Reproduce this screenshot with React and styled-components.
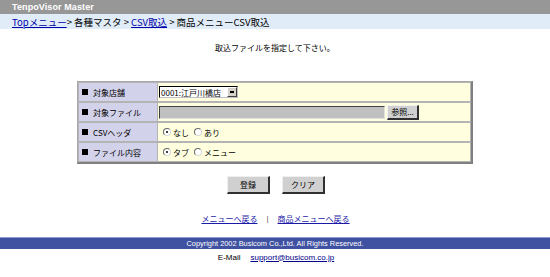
import React, { useState } from "react";
import styled, { createGlobalStyle } from "styled-components";

const GlobalStyle = createGlobalStyle`
  html, body {
    margin: 0;
    padding: 0;
    background: #ffffff;
  }
  body {
    font-family: "Noto Sans CJK JP", "Liberation Sans", sans-serif;
    font-size: 8px;
    color: #000000;
  }
`;

const Page = styled.div`
  width: 550px;
  height: 277px;
  display: flex;
  flex-direction: column;
  align-items: stretch;
  overflow: hidden;
`;

const TitleBar = styled.div`
  height: 14px;
  box-sizing: border-box;
  padding-left: 12px;
  display: flex;
  align-items: center;

  background: #979797;
  color: #ffffff;
  font-family: "Liberation Sans", sans-serif;
  font-size: 9px;
  font-weight: bold;
  letter-spacing: 0.1px;
`;

const Breadcrumb = styled.div`
  height: 15px;
  box-sizing: border-box;
  padding-left: 12px;
  display: flex;
  align-items: center;
  white-space: pre;

  background: #e0ecf8;
  font-size: 9.5px;
`;

const Link = styled.a`
  color: ${({ $tone }) => $tone || "#0000aa"};
  text-decoration: underline;
  cursor: pointer;
`;

const Message = styled.div`
  margin-top: 12px;
  height: 14px;
  line-height: 14px;
  text-align: center;
  font-size: 8px;
`;

const FormTable = styled.div`
  width: 396px;
  margin: 26px auto 0;
  box-sizing: border-box;

  display: grid;
  grid-template-columns: 78px 1fr;
  grid-auto-rows: 18px;
  gap: 2px 1px;

  padding: 1px;
  background: #b4b4b4;
  border: 1px solid #a8a8a8;
  border-right: 2px solid #808080;
  border-bottom: 2px solid #808080;
`;

const LabelCell = styled.div`
  display: flex;
  align-items: center;
  gap: 5px;
  padding-left: 3px;
  background: #d2d2ea;
  font-size: 8px;
  white-space: nowrap;

  &::before {
    content: "";
    width: 6px;
    height: 6px;
    background: #000000;
  }
`;

const ValueCell = styled.div`
  display: flex;
  align-items: center;
  gap: 2px;
  padding-left: 1px;
  background: #ffffe0;
  font-size: 8px;
`;

const Select = styled.div`
  width: 79px;
  height: 12px;
  box-sizing: border-box;
  display: flex;
  align-items: center;
  justify-content: space-between;

  background: #ffffff;
  border: 1px solid #000000;
  border-right-color: #c0c0c0;
  border-bottom-color: #c0c0c0;
  padding-left: 1px;
  font-size: 8px;
  white-space: nowrap;
`;

const SelectArrow = styled.span`
  width: 10px;
  height: 10px;
  box-sizing: border-box;
  display: flex;
  align-items: center;
  justify-content: center;
  background: #d4d0c8;
  border: 1px solid #ffffff;
  border-right-color: #404040;
  border-bottom-color: #404040;

  &::after {
    content: "";
    width: 4px;
    height: 2px;
    background: #000000;
  }
`;

const FileField = styled.div`
  width: 226px;
  height: 13px;
  box-sizing: border-box;
  background: #c0c0c0;
  border: 1px solid #404040;
  border-right-color: #e0e0e0;
  border-bottom-color: #e0e0e0;
`;

const SmallButton = styled.button`
  width: ${({ $width }) => $width || 32}px;
  height: ${({ $height }) => $height || 15}px;
  box-sizing: border-box;
  padding: 0;
  margin: 0;

  background: #d0d0d0;
  border: 1px solid #f0f0f0;
  border-right: 2px solid #303030;
  border-bottom: 2px solid #303030;
  font-family: "Noto Sans CJK JP", sans-serif;
  font-size: 8px;
  line-height: 1;
  color: #000000;
`;

const RadioGroup = styled.label`
  display: flex;
  align-items: center;
  gap: 2px;
  margin-left: ${({ $first }) => ($first ? 4 : 3)}px;
  cursor: pointer;
`;

const RadioDot = styled.span`
  width: 8px;
  height: 8px;
  box-sizing: border-box;
  border-radius: 50%;
  border: 1px solid #6a6a6a;
  border-right-color: #d8d8d8;
  border-bottom-color: #d8d8d8;
  background: #ffffff;
  display: flex;
  align-items: center;
  justify-content: center;

  &::after {
    content: "";
    width: 2px;
    height: 2px;
    border-radius: 50%;
    background: ${({ $checked }) => ($checked ? "#000000" : "transparent")};
  }
`;

const ButtonRow = styled.div`
  margin-top: 12px;
  display: flex;
  justify-content: center;
  gap: 12px;
  padding-left: 2px;
`;

const LinkRow = styled.div`
  margin-top: 17px;
  height: 14px;
  display: flex;
  justify-content: center;
  align-items: center;
  gap: 9px;
  font-size: 8px;
  padding-left: 1px;
`;

const Divider = styled.span`
  color: #555555;
  font-family: "Liberation Sans", sans-serif;
`;

const FooterBar = styled.div`
  margin-top: 12px;
  height: 12px;
  box-sizing: border-box;
  display: flex;
  align-items: center;
  justify-content: center;

  background: #3f51a1;
  border-top: 1px solid #8e9ad0;
  color: #ffffff;
  font-family: "Liberation Sans", sans-serif;
  font-size: 7.4px;
`;

const MailLine = styled.div`
  height: 16px;
  display: flex;
  justify-content: center;
  align-items: center;
  gap: 10px;
  font-family: "Liberation Sans", sans-serif;
  font-size: 8px;
  padding-left: 2px;
`;

const Radio = ({ checked, label, first, onSelect }) => (
  <RadioGroup $first={first} onClick={onSelect}>
    <RadioDot $checked={checked} />
    <span>{label}</span>
  </RadioGroup>
);

const App = () => {
  const [header, setHeader] = useState("none");
  const [content, setContent] = useState("tab");

  return (
    <>
      <GlobalStyle />
      <Page>
        <TitleBar>TenpoVisor Master</TitleBar>
        <Breadcrumb>
          <Link>Topメニュー</Link>
          {"> 各種マスタ > "}
          <Link>CSV取込</Link>
          {" > 商品メニューCSV取込"}
        </Breadcrumb>

        <Message>取込ファイルを指定して下さい。</Message>

        <FormTable>
          <LabelCell>対象店舗</LabelCell>
          <ValueCell>
            <Select>
              <span>0001:江戸川橋店</span>
              <SelectArrow />
            </Select>
          </ValueCell>

          <LabelCell>対象ファイル</LabelCell>
          <ValueCell>
            <FileField />
            <SmallButton type="button">参照...</SmallButton>
          </ValueCell>

          <LabelCell>CSVヘッダ</LabelCell>
          <ValueCell>
            <Radio
              first
              label="なし"
              checked={header === "none"}
              onSelect={() => setHeader("none")}
            />
            <Radio
              label="あり"
              checked={header === "with"}
              onSelect={() => setHeader("with")}
            />
          </ValueCell>

          <LabelCell>ファイル内容</LabelCell>
          <ValueCell>
            <Radio
              first
              label="タブ"
              checked={content === "tab"}
              onSelect={() => setContent("tab")}
            />
            <Radio
              label="メニュー"
              checked={content === "menu"}
              onSelect={() => setContent("menu")}
            />
          </ValueCell>
        </FormTable>

        <ButtonRow>
          <SmallButton type="button" $width={43} $height={18}>
            登録
          </SmallButton>
          <SmallButton type="button" $width={43} $height={18}>
            クリア
          </SmallButton>
        </ButtonRow>

        <LinkRow>
          <Link $tone="#1a1aa8">メニューへ戻る</Link>
          <Divider>|</Divider>
          <Link $tone="#1a1aa8">商品メニューへ戻る</Link>
        </LinkRow>

        <FooterBar>Copyright 2002 Busicom Co.,Ltd. All Rights Reserved.</FooterBar>
        <MailLine>
          <span>E-Mail</span>
          <Link $tone="#000088">support@busicom.co.jp</Link>
        </MailLine>
      </Page>
    </>
  );
};

export default App;
